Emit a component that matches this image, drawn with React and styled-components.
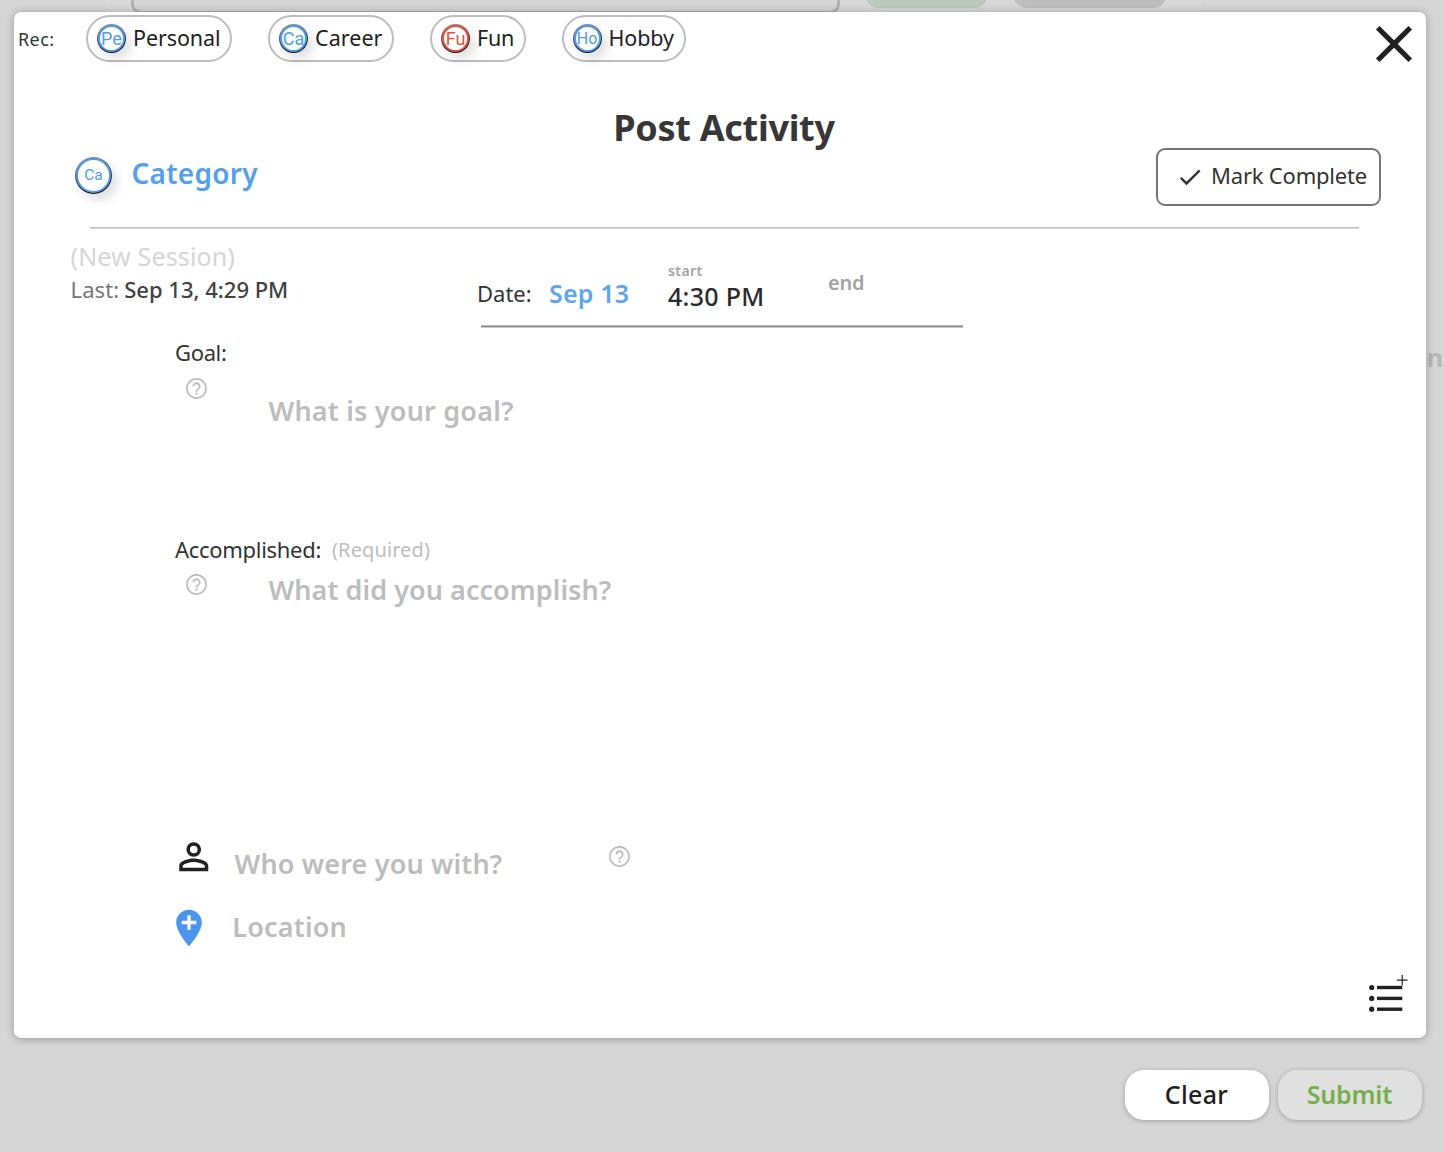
import React from 'react';
import styled, { createGlobalStyle } from 'styled-components';

const GlobalStyle = createGlobalStyle`
  * { box-sizing: border-box; }
  body { margin: 0; background: #d6d6d6; font-family: "Noto Sans", "Open Sans", sans-serif; }
`;

const Page = styled.div`
  position: relative;
  height: 1152px;
  overflow: hidden;
  background: #d6d6d6;
`;

/* Dimmed page that stays visible around the dialog */
const Backdrop = styled.div`
  position: absolute;
  inset: 0;
`;
const GhostPanel = styled.div`
  position: absolute;
  left: 105px;
  top: 0;
  width: 1096px;
  height: 40px;
  background: #d8d8d8;
`;
const GhostInput = styled.div`
  position: absolute;
  left: 131px;
  top: -40px;
  width: 709px;
  height: 54px;
  border: 3px solid #b1b1b1;
  border-radius: 10px;
  background: #d5d5d5;
`;
const GhostPill = styled.div`
  position: absolute;
  top: -40px;
  height: 48px;
  left: ${(p) => p.$left}px;
  width: ${(p) => p.$width}px;
  border-radius: 14px;
  background: ${(p) => p.$color};
`;
const GhostWord = styled.div`
  position: absolute;
  right: 1px;
  top: 342px;
  line-height: 30px;
  font-size: 25px;
  font-weight: 700;
  color: #b6b6b6;
`;

const Text = styled.span`
  display: block;
  margin: 0;
  white-space: nowrap;
  line-height: ${(p) => p.$line || 30}px;
  font-size: ${(p) => p.$size || 22}px;
  font-weight: ${(p) => p.$weight || 400};
  letter-spacing: ${(p) => p.$track || 0}px;
  color: ${(p) => p.$color || '#333'};
`;

const Dialog = styled.main`
  position: relative;
  display: flex;
  flex-direction: column;
  width: 1412px;
  height: 1026px;
  margin: 12px 0 0 14px;
  background: #fff;
  border-radius: 7px;
  box-shadow: 0 1px 9px rgba(0, 0, 0, 0.3);

  > * { flex-shrink: 0; }
`;

const RecBar = styled.div`
  display: flex;
  align-items: flex-start;
  height: 64px;
  padding-left: 4px;
`;
const RecLabel = styled.div`
  width: 70px;
  padding-top: 12px;
`;
const Chips = styled.div`
  display: flex;
  gap: 36px;
  padding-top: 3px;
  margin-left: -2px;
`;
const Chip = styled.button`
  display: flex;
  align-items: center;
  width: ${(p) => p.$width}px;
  height: 47px;
  padding: 0 0 0 9px;
  border: 2px solid #bdbdbd;
  border-radius: 24px;
  background: #fff;
  font-family: inherit;
`;
const ChipName = styled(Text)`
  margin: -1px 0 0 7px;
`;
const Ring = styled.span`
  flex: none;
  display: flex;
  width: ${(p) => p.$size}px;
  height: ${(p) => p.$size}px;
  padding: 1px;
  border-radius: 50%;
  background: linear-gradient(165deg, #999 5%, #666 35%, #111 80%);
  box-shadow: 5px 6px 11px rgba(0, 0, 0, 0.13);
`;
const Disc = styled.span`
  flex: 1;
  display: flex;
  align-items: center;
  justify-content: center;
  border: 2px solid ${(p) => p.$color};
  border-radius: 50%;
  background: #fff;
  color: ${(p) => p.$color};
  font-family: Roboto, sans-serif;
  font-size: ${(p) => p.$font}px;
  line-height: 20px;
`;
const CloseButton = styled.button`
  display: flex;
  margin: 1px 1px 0 auto;
  padding: 0;
  border: 0;
  background: none;
`;

const TitleRow = styled.div`
  display: flex;
  justify-content: center;
  height: 71px;
  padding: 32px 0 0 8px;
`;
const Header = styled.div`
  display: flex;
  align-items: flex-start;
  height: 80px;
  padding: 1px 45px 0 61px;
`;
const HeaderAvatar = styled.div`
  padding-top: 8.5px;
`;
const CategoryName = styled(Text)`
  margin: 10px 0 0 19.5px;
`;
const MarkButton = styled.button`
  display: flex;
  align-items: center;
  gap: 7px;
  width: 225px;
  height: 58px;
  margin-left: auto;
  padding: 0 0 0 18px;
  border: 2px solid #757575;
  border-radius: 9px;
  background: #fff;
  font-family: inherit;
`;
const MarkLabel = styled(Text)`
  margin-top: -5px;
`;
const Divider = styled.div`
  height: 2px;
  margin: 0 67px 0 76px;
  background: linear-gradient(#bcbcbc 50%, #dadada 50%);
`;

const SessionRow = styled.div`
  display: flex;
  height: 99px;
  padding-left: 56.5px;
`;
const SessionInfo = styled.div`
  display: flex;
  flex-direction: column;
  gap: 3px;
  width: 406.5px;
  padding-top: 12px;
`;
const LastLine = styled.div`
  display: flex;
  gap: 5px;
`;
const DateBlock = styled.div`
  width: 486px;
`;
const DateFields = styled.div`
  display: flex;
  height: 96px;
`;
const DateCell = styled.div`
  width: ${(p) => p.$width}px;
  padding-top: ${(p) => p.$top}px;
`;
const DateLine = styled.div`
  height: 3px;
  margin-left: 3.5px;
  background: linear-gradient(#b8b8b8 33%, #8c8c8c 33% 67%, #c8c8c8 67%);
`;

const Section = styled.section`
  height: ${(p) => p.$height}px;
  padding: ${(p) => p.$top}px 0 0 161px;
`;
const SectionLabel = styled.div`
  display: flex;
  gap: 11px;
`;
const RequiredMark = styled(Text)`
  margin-top: 0.7px;
`;
const Field = styled.div`
  display: flex;
  align-items: flex-start;
  padding: ${(p) => p.$top}px 0 0 8.5px;
`;
const Placeholder = styled(Text)`
  width: ${(p) => p.$width || 'auto'};
  margin-top: ${(p) => p.$top}px;
  margin-left: ${(p) => p.$left}px;
`;
const InlineRow = styled.div`
  display: flex;
  align-items: flex-start;
  height: ${(p) => p.$height}px;
  padding-left: ${(p) => p.$left}px;
`;
const HelpSlot = styled.div`
  padding-top: 9.3px;
`;
const Tools = styled.div`
  display: flex;
  justify-content: flex-end;
  margin-top: auto;
  padding: 0 18px 24px 0;
`;

const Footer = styled.footer`
  position: relative;
  display: flex;
  justify-content: flex-end;
  gap: 9px;
  padding: 32.3px 22px 0 0;
`;
const Action = styled.button`
  display: flex;
  justify-content: center;
  align-items: center;
  width: 144px;
  height: 50px;
  padding: 0 1px 3px 0;
  border: 0;
  border-radius: 19px;
  background: ${(p) => p.$bg};
  box-shadow: 0 1px 5px rgba(0, 0, 0, 0.25);
  font-family: inherit;
`;
const Svg = styled.svg`
  display: block;
  flex: none;
`;

const Icon = ({ size, color, d }) => (
  <Svg width={size} height={size} viewBox="0 0 24 24" fill={color}>
    <path d={d} />
  </Svg>
);

const paths = {
  close:
    'M19 6.41L17.59 5 12 10.59 6.41 5 5 6.41 10.59 12 5 17.59 6.41 19 12 13.41 17.59 19 19 17.59 13.41 12z',
  check: 'M9 16.17L4.83 12l-1.42 1.41L9 19 21 7l-1.41-1.41z',
  help: 'M11 18h2v-2h-2v2zm1-16C6.48 2 2 6.48 2 12s4.48 10 10 10 10-4.48 10-10S17.52 2 12 2zm0 18.3c-4.58 0-8.3-3.72-8.3-8.3S7.42 3.7 12 3.7s8.3 3.72 8.3 8.3-3.72 8.3-8.3 8.3zm0-14.2c-2.15 0-3.9 1.75-3.9 3.9h1.7c0-1.2 1-2.2 2.2-2.2s2.2 1 2.2 2.2c0 2-3.05 1.8-3.05 5h1.7c0-2.2 3.05-2.5 3.05-5 0-2.15-1.75-3.9-3.9-3.9z',
  person:
    'M12 5.9a2.1 2.1 0 110 4.2 2.1 2.1 0 010-4.2m0 9c2.97 0 6.1 1.46 6.1 2.1v1.1H5.9V17c0-.64 3.13-2.1 6.1-2.1M12 4C9.79 4 8 5.79 8 8s1.79 4 4 4 4-1.79 4-4-1.79-4-4-4zm0 9c-2.67 0-8 1.34-8 4v3h16v-3c0-2.66-5.33-4-8-4z',
  pin: 'M12 2C8.14 2 5 5.14 5 9c0 5.25 7 13 7 13s7-7.75 7-13c0-3.86-3.14-7-7-7zm4 7.9h-3.1V13h-1.8V9.9H8V8.1h3.1V5h1.8v3.1H16v1.8z',
};

const ListAddIcon = () => (
  <Svg width="40" height="40" viewBox="0 0 40 40" fill="#212121">
    {[13.5, 24.4, 35.2].map((y) => (
      <g key={y}>
        <circle cx="3.7" cy={y} r="2.6" />
        <rect x="9" y={y - 1.7} width="25.3" height="3.4" />
      </g>
    ))}
    <path d="M33.6 1h1.2v4.6h4.7v1.2h-4.7v4.6h-1.2V6.8h-4.7V5.6h4.7z" />
  </Svg>
);

const Help = () => <Icon size={25} color="#bdbdbd" d={paths.help} />;

const Avatar = ({ size, color, font, children }) => (
  <Ring $size={size}>
    <Disc $color={color} $font={font}>{children}</Disc>
  </Ring>
);

const BLUE = '#4f9bef';
const RED = '#e35343';
const MUTED = '#bdbdbd';

const recent = [
  { code: 'Pe', name: 'Personal', width: 146, color: BLUE, font: 18, track: -0.1 },
  { code: 'Ca', name: 'Career', width: 126, color: BLUE, font: 18, track: 0.05 },
  { code: 'Fu', name: 'Fun', width: 95.5, color: RED, font: 18, track: -0.2 },
  { code: 'Ho', name: 'Hobby', width: 124.5, color: BLUE, font: 16, track: -0.1 },
];

export default function App() {
  return (
    <Page>
      <GlobalStyle />
      <Backdrop>
        <GhostPanel />
        <GhostInput />
        <GhostPill $left={865} $width={123} $color="#bccabc" />
        <GhostPill $left={1013} $width={154} $color="#bebebe" />
        <GhostWord>en</GhostWord>
      </Backdrop>

      <Dialog>
        <RecBar>
          <RecLabel><Text $size={18} $track={0.4}>Rec:</Text></RecLabel>
          <Chips>
            {recent.map((c) => (
              <Chip key={c.name} $width={c.width}>
                <Avatar size={29} color={c.color} font={c.font}>{c.code}</Avatar>
                <ChipName $size={21.5} $color="#212121" $track={c.track}>{c.name}</ChipName>
              </Chip>
            ))}
          </Chips>
          <CloseButton aria-label="Close"><Icon size={62} color="#212121" d={paths.close} /></CloseButton>
        </RecBar>

        <TitleRow>
          <Text as="h1" $size={36} $weight={700} $line={40} $track={-0.3} $color="#373737">Post Activity</Text>
        </TitleRow>

        <Header>
          <HeaderAvatar><Avatar size={37} color={BLUE} font={15.5}>Ca</Avatar></HeaderAvatar>
          <CategoryName $size={28} $weight={600} $track={0.25} $color="#569fee">Category</CategoryName>
          <MarkButton>
            <Icon size={28} color="#333" d={paths.check} />
            <MarkLabel $track={-0.2}>Mark Complete</MarkLabel>
          </MarkButton>
        </Header>
        <Divider />

        <SessionRow>
          <SessionInfo>
            <Text $size={25} $track={0.15} $color="#d6d6d6">(New Session)</Text>
            <LastLine>
              <Text $track={0.1} $color="#757575">Last:</Text>
              <Text $weight={500} $track={0} $color="#424242">Sep 13, 4:29 PM</Text>
            </LastLine>
          </SessionInfo>
          <DateBlock>
            <DateFields>
              <DateCell $width={72} $top={48.6}><Text $track={0}>Date:</Text></DateCell>
              <DateCell $width={119} $top={48.6}><Text $size={25} $weight={600} $track={0.2} $color="#5fa5f0">Sep 13</Text></DateCell>
              <DateCell $width={160} $top={31.5}>
                <Text $size={14} $weight={600} $line={20} $track={0.4} $color="#a3a3a3">start</Text>
                <Text $size={25} $weight={500} $track={0.3} $color="#2b2b2b">4:30 PM</Text>
              </DateCell>
              <DateCell $width={60} $top={38.5}><Text $size={20} $weight={600} $track={-0.2} $color="#a3a3a3">end</Text></DateCell>
            </DateFields>
            <DateLine />
          </DateBlock>
        </SessionRow>

        <Section $top={8.6} $height={196.5}>
          <Text $track={-0.35}>Goal:</Text>
          <Field $top={9.3}>
            <Help />
            <Placeholder $left={60} $top={20.6} $size={27} $weight={600} $track={0.2} $color={MUTED}>What is your goal?</Placeholder>
          </Field>
        </Section>

        <Section $top={9.5} $height={310}>
          <SectionLabel>
            <Text $track={-0.3}>Accomplished:</Text>
            <RequiredMark $size={20} $track={0.1} $color={MUTED}>(Required)</RequiredMark>
          </SectionLabel>
          <Field $top={7}>
            <Help />
            <Placeholder $left={60} $top={3.8} $size={27} $weight={600} $track={0.05} $color={MUTED}>What did you accomplish?</Placeholder>
          </Field>
        </Section>

        <InlineRow $height={71.5} $left={158}>
          <Icon size={43.5} color="#212121" d={paths.person} />
          <Placeholder $left={19} $top={14} $width="372px" $size={27} $weight={600} $track={0.15} $color={MUTED}>Who were you with?</Placeholder>
          <HelpSlot><Help /></HelpSlot>
        </InlineRow>
        <InlineRow $height={50} $left={153}>
          <Icon size={44} color="#4a96ee" d={paths.pin} />
          <Placeholder $left={21.2} $top={6.3} $size={27} $weight={600} $track={0.2} $color={MUTED}>Location</Placeholder>
        </InlineRow>

        <Tools><ListAddIcon /></Tools>
      </Dialog>

      <Footer>
        <Action $bg="#fff"><Text $size={25} $weight={500} $track={0.3} $color="#212121">Clear</Text></Action>
        <Action $bg="#e0e0e0"><Text $size={25} $weight={600} $track={-0.2} $color="#76b04e">Submit</Text></Action>
      </Footer>
    </Page>
  );
}
